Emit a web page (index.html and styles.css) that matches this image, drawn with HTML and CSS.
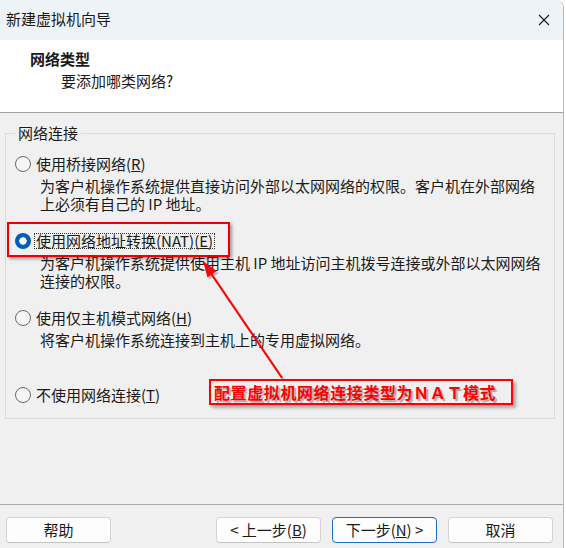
FILE: index.html
```html
<!DOCTYPE html>
<html lang="zh-CN">
<head>
<meta charset="utf-8">
<title>新建虚拟机向导</title>
<link rel="stylesheet" href="styles.css">
</head>
<body>
<div class="window">
  <div class="titlebar">
    <span class="title">新建虚拟机向导</span>
    <svg class="close" width="12" height="12" viewBox="0 0 12 12"><path d="M1 1L11 11M11 1L1 11" stroke="#1b1b1b" stroke-width="1.1" fill="none"/></svg>
  </div>
  <div class="header">
    <div class="h-title">网络类型</div>
    <div class="h-sub">要添加哪类网络?</div>
  </div>
  <div class="body">
    <fieldset class="group">
      <legend>网络连接</legend>
      <div class="options">
        <div class="option">
          <div class="row"><span class="radio"></span><span class="label">使用桥接网络(<u>R</u>)</span></div>
          <div class="desc">为客户机操作系统提供直接访问外部以太网网络的权限。客户机在外部网络<br>上必须有自己的 IP 地址。</div>
        </div>
        <div class="option">
          <div class="row"><span class="radio checked"></span><span class="label focus">使用网络地址转换(NAT)(<u>E</u>)</span></div>
          <div class="desc">为客户机操作系统提供使用主机 IP 地址访问主机拨号连接或外部以太网网络<br>连接的权限。</div>
        </div>
        <div class="option">
          <div class="row"><span class="radio"></span><span class="label">使用仅主机模式网络(<u>H</u>)</span></div>
          <div class="desc">将客户机操作系统连接到主机上的专用虚拟网络。</div>
        </div>
        <div class="option">
          <div class="row"><span class="radio"></span><span class="label">不使用网络连接(<u>T</u>)</span></div>
        </div>
      </div>
    </fieldset>
  </div>
  <div class="footer">
    <button class="btn">帮助</button>
    <span class="spacer"></span>
    <button class="btn">&lt; 上一步(<u>B</u>)</button>
    <button class="btn primary">下一步(<u>N</u>) &gt;</button>
    <button class="btn">取消</button>
  </div>

  <div class="mark-box"></div>
  <svg class="arrow" width="566" height="548" viewBox="0 0 566 548">
    <g transform="translate(2,2)" opacity="0.35">
      <line x1="282" y1="378" x2="210" y2="272" stroke="#555" stroke-width="2"/>
      <polygon points="203,261 216.5,271 207.5,277.5" fill="#555"/>
    </g>
    <line x1="282" y1="378" x2="210" y2="272" stroke="#f00" stroke-width="2"/>
    <polygon points="203,261 216.5,271 207.5,277.5" fill="#f00"/>
  </svg>
  <div class="note">配置虚拟机网络连接类型为ＮＡＴ模式</div>
</div>
</body>
</html>
```
FILE: styles.css
```css
html, body {
  margin: 0;
  padding: 0;
  background: #ffffff;
}
body {
  font-family: "Noto Sans CJK SC", "Noto Sans", sans-serif;
  font-size: 15px;
  color: #1a1a1a;
}
.window {
  position: relative;
  width: 563px;
  height: 548px;
  border-right: 1px solid #b9b9b9;
  border-top-right-radius: 8px;
  overflow: hidden;
  display: flex;
  flex-direction: column;
  background: #f0f0f0;
}
.titlebar {
  height: 40px;
  flex: none;
  background: #eef3f7;
  display: flex;
  align-items: center;
  padding: 0 0 0 6px;
  box-sizing: border-box;
}
.title {
  flex: 1;
  line-height: 20px;
  padding-bottom: 2px;
}
.close {
  margin-right: 13px;
  margin-bottom: 1px;
}
.header {
  height: 73px;
  flex: none;
  box-sizing: border-box;
  background: #ffffff;
  border-bottom: 1px solid #a0a0a0;
  padding: 9px 0 0 30px;
}
.h-title {
  font-weight: 700;
  line-height: 20px;
}
.h-sub {
  line-height: 20px;
  margin-top: 2px;
  padding-left: 31px;
}
.body {
  height: 391px;
  flex: none;
  box-sizing: border-box;
  padding: 10px 8px 0 5px;
}
.group {
  margin: 0;
  padding: 0 0 13px 9px;
  border: 1px solid #dcdcdc;
  min-width: 0;
}
.group legend {
  margin-left: 0;
  padding: 0 3px;
  line-height: 20px;
}
.options {
  margin-top: 11px;
  display: flex;
  flex-direction: column;
  gap: 18px;
}
.row {
  height: 20px;
  display: flex;
  align-items: center;
  gap: 5px;
}
.radio {
  width: 14px;
  height: 14px;
  border-radius: 50%;
  border: 1px solid #6a6a6a;
  background: #f5f5f5;
  flex: none;
}
.radio.checked {
  width: 16px;
  height: 16px;
  border: none;
  background: radial-gradient(circle, #ffffff 0 3.4px, #005fb8 4px);
}
.label {
  line-height: 20px;
}
.label.focus {
  line-height: 14px;
  border: 1px dotted #333;
  padding: 0 1px;
  margin-left: -2px;
}
.desc {
  margin-top: 3px;
  padding-left: 25px;
  line-height: 18px;
  min-height: 36px;
}
.footer {
  flex: 1;
  border-top: 1px solid #a8a8a8;
  display: flex;
  align-items: flex-start;
  padding: 12px 10px 0 6px;
  gap: 11px;
}
.spacer {
  flex: 1;
}
.btn {
  width: 105px;
  height: 26px;
  font-family: inherit;
  font-size: 15px;
  color: #1a1a1a;
  background: #fdfdfd;
  border: 1px solid #d4d4d4;
  border-bottom-color: #c4c4c4;
  border-radius: 4px;
  padding: 0;
  line-height: 22px;
}
.btn.primary {
  border: 1px solid #1a6fc4;
}
.mark-box {
  position: absolute;
  left: 7px;
  top: 222px;
  width: 219px;
  height: 31px;
  border: 2px solid #ee0000;
  box-shadow: 2px 2px 3px rgba(0, 0, 0, 0.35);
}
.arrow {
  position: absolute;
  left: 0;
  top: 0;
  pointer-events: none;
}
.note {
  position: absolute;
  left: 209px;
  top: 379px;
  width: 297px;
  height: 22px;
  border: 2px solid #ff0000;
  box-shadow: 3px 3px 3px rgba(0, 0, 0, 0.3);
  color: #ff0000;
  font-weight: 700;
  font-size: 16px;
  line-height: 22px;
  letter-spacing: 0.6px;
  padding-left: 3px;
  box-sizing: content-box;
  text-shadow: 2px 2px 1px rgba(0, 0, 0, 0.3);
  white-space: nowrap;
}
```
